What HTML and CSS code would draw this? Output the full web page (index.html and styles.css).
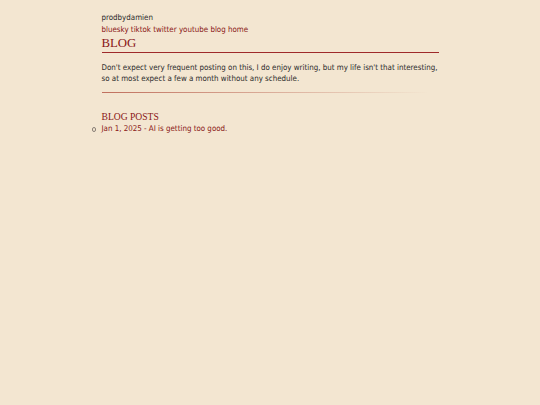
FILE: index.html
```html
<!DOCTYPE html>
<html lang="en">
<head>
<meta charset="utf-8">
<title>prodbydamien - blog</title>
<link rel="stylesheet" href="styles.css">
</head>
<body>
<div class="page">
  <header class="site-header">
    <div class="site-name">prodbydamien</div>
    <nav class="site-nav">
      <a href="#">bluesky</a>
      <a href="#">tiktok</a>
      <a href="#">twitter</a>
      <a href="#">youtube</a>
      <a href="#">blog</a>
      <a href="#">home</a>
    </nav>
  </header>
  <main>
    <h1 class="title">BLOG</h1>
    <p class="intro">Don't expect very frequent posting on this, I do enjoy writing, but my life isn't that interesting, so at most expect a few a month without any schedule.</p>
    <hr class="divider">
    <h2 class="section-title">BLOG POSTS</h2>
    <ul class="posts">
      <li class="post"><a href="#">Jan 1, 2025 - AI is getting too good.</a></li>
    </ul>
  </main>
</div>
</body>
</html>
```
FILE: styles.css
```css
html, body {
  margin: 0;
  padding: 0;
  background: #f3e6d1;
}
body {
  font-family: "DejaVu Sans Condensed", "Liberation Sans Narrow", "DejaVu Sans", sans-serif;
  font-size: 7.9px;
  line-height: 11.5px;
  color: #2b2b2b;
}
.page {
  width: 337px;
  margin: 0 auto;
  padding-top: 11.5px;
}
a {
  color: #8a1616;
  text-decoration: none;
}
.site-name {
  color: #2b2b2b;
}
.site-nav {
  margin-top: 0.5px;
}
.title {
  font-family: "Liberation Serif", "DejaVu Serif", serif;
  font-weight: normal;
  font-size: 12.8px;
  line-height: 15px;
  color: #8a1616;
  margin: 1px 0 0;
  padding-bottom: 0.5px;
  border-bottom: 1.5px solid #9e2a2a;
}
.intro {
  margin: 9px 0 0;
}
.divider {
  border: 0;
  height: 1px;
  width: 327px;
  margin: 7.5px 0 0;
  background: linear-gradient(to right, #c0705e, rgba(220, 150, 130, 0.0));
}
.section-title {
  font-family: "Liberation Serif", "DejaVu Serif", serif;
  font-weight: normal;
  font-size: 9.6px;
  line-height: 12px;
  color: #8a1616;
  margin: 17.5px 0 0;
}
.posts {
  list-style: none;
  margin: 0;
  padding: 0;
}
.post {
  position: relative;
}
.post::before {
  content: "";
  position: absolute;
  left: -10px;
  top: 4.5px;
  width: 2.5px;
  height: 2.5px;
  border: 1px solid #8a8078;
  border-radius: 50%;
}
```
